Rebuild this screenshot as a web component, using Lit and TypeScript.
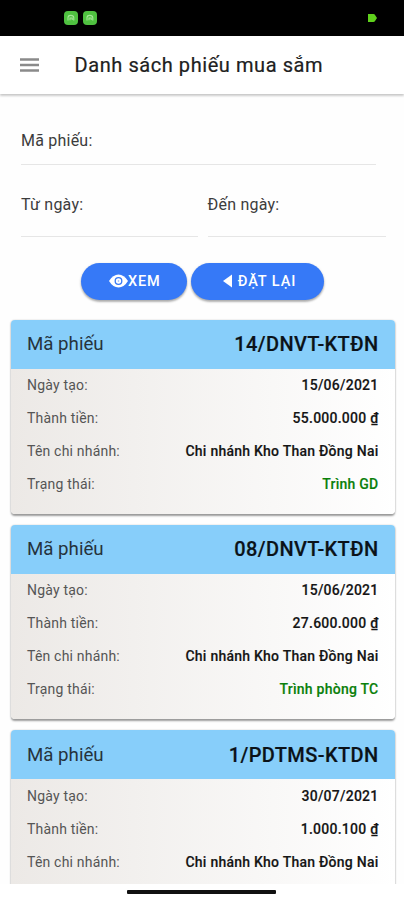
import { LitElement, html, css, svg, nothing } from "lit";
import { customElement, property } from "lit/decorators.js";

interface Voucher {
  code: string;
  date: string;
  amount: string;
  branch: string;
  status?: string;
}

const vouchers: Voucher[] = [
  { code: "14/DNVT-KTĐN", date: "15/06/2021", amount: "55.000.000 ₫", branch: "Chi nhánh Kho Than Đồng Nai", status: "Trình GD" },
  { code: "08/DNVT-KTĐN", date: "15/06/2021", amount: "27.600.000 ₫", branch: "Chi nhánh Kho Than Đồng Nai", status: "Trình phòng TC" },
  { code: "1/PDTMS-KTDN", date: "30/07/2021", amount: "1.000.100 ₫", branch: "Chi nhánh Kho Than Đồng Nai" },
];

const glyph = svg`<path d="M4 9.6V6.4Q4.2 4.4 6.8 4.4Q9.6 4.4 9.8 6.6V9.4M6 9.2V7H8.2V9" fill="none" stroke="#a5e698" stroke-width="1.1"/>`;

@customElement("voucher-card")
export class VoucherCard extends LitElement {
  @property({ attribute: false }) voucher!: Voucher;

  static styles = css`
    :host {
      display: block;
      height: 194.6px;
      flex: none;
      box-sizing: border-box;
      border-radius: 4px;
      overflow: hidden;
      background: linear-gradient(90deg, #ece9e6, #ffffff);
      box-shadow: 0 1.5px 2px rgba(0, 0, 0, 0.38), 0 0 2px rgba(0, 0, 0, 0.12);
    }
    .head {
      display: flex;
      align-items: center;
      justify-content: space-between;
      height: 49.3px;
      padding: 0 16.5px 0 16px;
      background: #87cefa;
      font-size: 18.7px;
      color: #26333d;
    }
    .code {
      font-size: 20px;
      font-weight: 500;
      color: #0b1218;
      letter-spacing: 0.38px;
      -webkit-text-stroke: 0.2px;
    }
    .row {
      display: flex;
      align-items: center;
      justify-content: space-between;
      height: 33px;
      padding: 0 16.5px 0 16px;
      font-size: 14px;
      letter-spacing: 0.2px;
      color: #555;
    }
    .value {
      font-weight: 500;
      color: #151515;
      letter-spacing: 0.24px;
      -webkit-text-stroke: 0.15px;
    }
    .status {
      color: #0a800a;
    }
  `;

  private row(label: string, value: string, extra = "") {
    return html`<div class="row"><span>${label}</span><span class="value ${extra}">${value}</span></div>`;
  }

  render() {
    const v = this.voucher;
    return html`
      <div class="head"><span>Mã phiếu</span><span class="code">${v.code}</span></div>
      ${this.row("Ngày tạo:", v.date)}
      ${this.row("Thành tiền:", v.amount)}
      ${this.row("Tên chi nhánh:", v.branch)}
      ${v.status ? this.row("Trạng thái:", v.status, "status") : nothing}
    `;
  }
}

@customElement("app-root")
export class AppRoot extends LitElement {
  static styles = css`
    :host {
      display: flex;
      flex-direction: column;
      width: 404px;
      height: 900px;
      overflow: hidden;
      background: #fff;
      font-family: Roboto, "Noto Sans", sans-serif;
    }
    .statusbar {
      display: flex;
      align-items: center;
      justify-content: space-between;
      flex: none;
      height: 35.5px;
      box-sizing: border-box;
      padding: 1px 27px 0 64px;
      background: #000;
    }
    .apps {
      display: flex;
      gap: 5px;
    }
    svg {
      display: block;
      flex: none;
    }
    .toolbar {
      display: flex;
      align-items: center;
      flex: none;
      height: 58.5px;
      padding-left: 20px;
      gap: 35.5px;
      box-shadow: 0 2px 2px rgba(0, 0, 0, 0.14), 0 1px 3px rgba(0, 0, 0, 0.12);
      z-index: 1;
    }
    .title {
      margin: 0;
      font-size: 20px;
      font-weight: 400;
      color: #202020;
      letter-spacing: 0.57px;
      -webkit-text-stroke: 0.2px;
    }
    .content {
      flex: 1;
      min-height: 0;
      overflow: hidden;
      background: #fefefe;
    }
    .form {
      display: grid;
      grid-template-columns: 177px 178.5px;
      column-gap: 9.5px;
      padding: 18px 18px 0 21px;
    }
    .field {
      height: 72px;
      box-sizing: border-box;
      padding-top: 30px;
      border-bottom: 1.5px solid #e6e6e6;
      font-size: 16px;
      line-height: 20px;
      letter-spacing: 0.22px;
      color: #3c3c3c;
    }
    .wide {
      grid-column: 1 / 3;
      height: 53px;
      padding-top: 18.5px;
      margin-right: 10px;
    }
    .buttons {
      display: flex;
      justify-content: center;
      gap: 4.5px;
      padding: 25.5px 0 0 1px;
    }
    .btn {
      display: flex;
      align-items: center;
      justify-content: center;
      height: 37.5px;
      border: 0;
      padding: 0;
      border-radius: 19px;
      background: #3679f7;
      color: #fff;
      font: 500 14.5px Roboto, sans-serif;
      letter-spacing: 0.9px;
      box-shadow: 0 2px 2px rgba(0, 0, 0, 0.22), 0 1px 3px rgba(0, 0, 0, 0.18);
    }
    .view {
      width: 106px;
      box-sizing: border-box;
      padding-left: 2px;
    }
    .reset {
      width: 133px;
      box-sizing: border-box;
      padding-left: 4px;
      gap: 5.5px;
    }
    .list {
      display: flex;
      flex-direction: column;
      gap: 10.6px;
      padding: 19.5px 9px 0 11px;
    }
    .gesture {
      display: flex;
      justify-content: center;
      flex: none;
      height: 16px;
      box-sizing: border-box;
      padding: 6px 2px 0 0;
      background: #fff;
      z-index: 1;
    }
    .pill {
      width: 149px;
      height: 3.5px;
      border-radius: 1px;
      background: #111;
    }
  `;

  render() {
    return html`
      <div class="statusbar">
        <div class="apps">
          <svg width="14" height="14" viewBox="0 0 14 14"><rect width="14" height="14" rx="4" fill="#4fc140" />${glyph}</svg>
          <svg width="14" height="14" viewBox="0 0 14 14"><rect width="14" height="14" rx="4" fill="#4fc140" />${glyph}</svg>
        </div>
        <svg width="9" height="8" viewBox="0 0 9 8"><path d="M0 0H5.5Q7 0 7.5 1.8L9 4L7.5 6.2Q7 8 5.5 8H0Z" fill="#5fd01c" /></svg>
      </div>
      <header class="toolbar">
        <svg width="19" height="14" viewBox="0 0 19 14"><path d="M0 1.5H19M0 7H19M0 12.5H19" stroke="#8a8a8a" stroke-width="2.6" /></svg>
        <h1 class="title">Danh sách phiếu mua sắm</h1>
      </header>
      <main class="content">
        <div class="form">
          <label class="field wide">Mã phiếu:</label>
          <label class="field">Từ ngày:</label>
          <label class="field">Đến ngày:</label>
        </div>
        <div class="buttons">
          <button class="btn view">
            <svg width="19" height="14" viewBox="0 0 19 14">
              <path d="M0 7Q4 .5 9.5 .5T19 7Q15 13.5 9.5 13.5T0 7Z" fill="#fff" />
              <circle cx="9.5" cy="7" r="3.3" fill="none" stroke="#3679f7" stroke-width="1.3" />
              <circle cx="9.5" cy="7" r="0.8" fill="#86aefa" />
            </svg>
            XEM
          </button>
          <button class="btn reset">
            <svg width="9" height="14" viewBox="0 0 9 14"><path d="M9 .5V13.5L0 7Z" fill="#fff" /></svg>
            ĐẶT LẠI
          </button>
        </div>
        <div class="list">${vouchers.map((v) => html`<voucher-card .voucher=${v}></voucher-card>`)}</div>
      </main>
      <div class="gesture"><div class="pill"></div></div>
    `;
  }
}
